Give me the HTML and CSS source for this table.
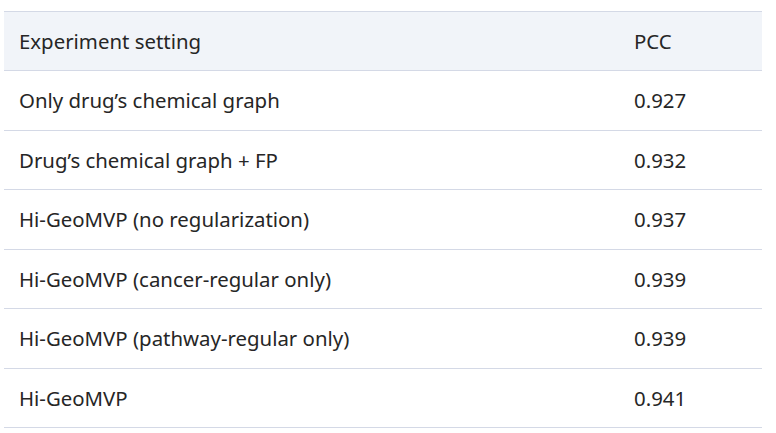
FILE: index.html
```html
<!DOCTYPE html>
<html lang="en">
<head>
<meta charset="utf-8">
<title>Ablation results</title>
<link rel="stylesheet" href="styles.css">
</head>
<body>
<div class="wrap">
  <table class="results">
    <thead>
      <tr><th class="setting">Experiment setting</th><th class="score">PCC</th></tr>
    </thead>
    <tbody>
      <tr><td class="setting">Only drug’s chemical graph</td><td class="score">0.927</td></tr>
      <tr><td class="setting">Drug’s chemical graph + FP</td><td class="score">0.932</td></tr>
      <tr><td class="setting">Hi-GeoMVP (no regularization)</td><td class="score">0.937</td></tr>
      <tr><td class="setting">Hi-GeoMVP (cancer-regular only)</td><td class="score">0.939</td></tr>
      <tr><td class="setting">Hi-GeoMVP (pathway-regular only)</td><td class="score">0.939</td></tr>
      <tr><td class="setting">Hi-GeoMVP</td><td class="score">0.941</td></tr>
    </tbody>
  </table>
</div>
</body>
</html>
```

FILE: styles.css
```css
html, body {
  margin: 0;
  padding: 0;
  background: #ffffff;
}

.wrap {
  padding: 11px 14px 0 4px;
}

.results {
  width: 758px;
  border-collapse: collapse;
  font-family: "Noto Sans", "Open Sans", sans-serif;
  font-size: 20.4px;
  line-height: 28px;
  color: #262626;
}

.results th,
.results td {
  text-align: left;
  font-weight: 400;
  height: 59.5px;
  padding: 0 15px;
  border-top: 1px solid #d4d9e6;
  border-bottom: 1px solid #d4d9e6;
  vertical-align: middle;
  box-sizing: border-box;
}

.results thead th {
  height: 59px;
  background: #f1f4f9;
}

.results .score {
  width: 143px;
}
```
